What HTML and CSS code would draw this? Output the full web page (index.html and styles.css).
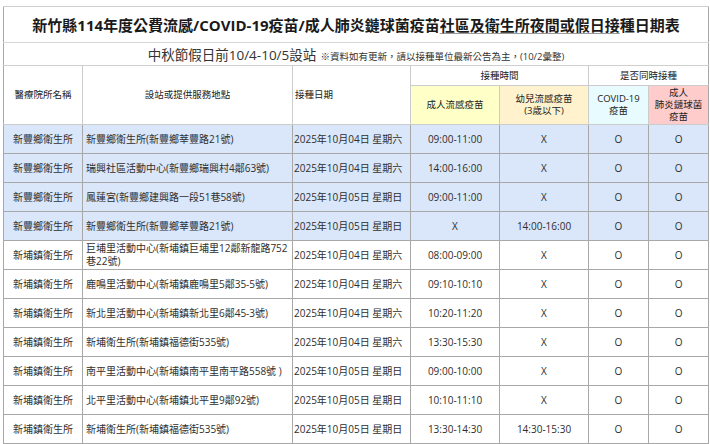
FILE: index.html
```html
<!DOCTYPE html>
<html lang="zh-Hant">
<head>
<meta charset="utf-8">
<title>接種日期表</title>
<link rel="stylesheet" href="styles.css">
</head>
<body>
<table class="sched">
  <colgroup>
    <col class="c-org"><col class="c-site"><col class="c-date"><col class="c-t1"><col class="c-t2"><col class="c-t3"><col class="c-t4">
  </colgroup>
  <thead>
    <tr class="r-title"><th colspan="7">新竹縣114年度公費流感/COVID-19疫苗/成人肺炎鏈球菌疫苗<span class="ul">社區及衛生所夜間或假日接</span>種日期表</th></tr>
    <tr class="r-sub"><th colspan="7"><span class="big">中秋節假日前10/4-10/5設站</span> <span class="note">※資料如有更新，請以接種單位最新公告為主，(10/2彙整)</span></th></tr>
    <tr class="r-h1">
      <th rowspan="2" class="h">醫療院所名稱</th>
      <th rowspan="2" class="h">設站或提供服務地點</th>
      <th rowspan="2" class="h left">接種日期</th>
      <th colspan="2" class="h">接種時間</th>
      <th colspan="2" class="h">是否同時接種</th>
    </tr>
    <tr class="r-h2">
      <th class="h y1">成人流感疫苗</th>
      <th class="h y2">幼兒流感疫苗<br>(3歲以下)</th>
      <th class="h cy">COVID-19<br>疫苗</th>
      <th class="h pk">成人<br>肺炎鏈球菌<br>疫苗</th>
    </tr>
  </thead>
  <tbody>
    <tr class="blue"><td>新豐鄉衛生所</td><td class="site">新豐鄉衛生所(新豐鄉莘豐路21號)</td><td class="date">2025年10月04日 星期六</td><td>09:00-11:00</td><td>X</td><td>O</td><td>O</td></tr>
    <tr class="blue"><td>新豐鄉衛生所</td><td class="site">瑞興社區活動中心(新豐鄉瑞興村4鄰63號)</td><td class="date">2025年10月04日 星期六</td><td>14:00-16:00</td><td>X</td><td>O</td><td>O</td></tr>
    <tr class="blue"><td>新豐鄉衛生所</td><td class="site">鳳蓮宮(新豐鄉建興路一段51巷58號)</td><td class="date">2025年10月05日 星期日</td><td>09:00-11:00</td><td>X</td><td>O</td><td>O</td></tr>
    <tr class="blue"><td>新豐鄉衛生所</td><td class="site">新豐鄉衛生所(新豐鄉莘豐路21號)</td><td class="date">2025年10月05日 星期日</td><td>X</td><td>14:00-16:00</td><td>O</td><td>O</td></tr>
    <tr><td>新埔鎮衛生所</td><td class="site">巨埔里活動中心(新埔鎮巨埔里12鄰新龍路752<br>巷22號)</td><td class="date">2025年10月04日 星期六</td><td>08:00-09:00</td><td>X</td><td>O</td><td>O</td></tr>
    <tr><td>新埔鎮衛生所</td><td class="site">鹿鳴里活動中心(新埔鎮鹿鳴里5鄰35-5號)</td><td class="date">2025年10月04日 星期六</td><td>09:10-10:10</td><td>X</td><td>O</td><td>O</td></tr>
    <tr><td>新埔鎮衛生所</td><td class="site">新北里活動中心(新埔鎮新北里6鄰45-3號)</td><td class="date">2025年10月04日 星期六</td><td>10:20-11:20</td><td>X</td><td>O</td><td>O</td></tr>
    <tr><td>新埔鎮衛生所</td><td class="site">新埔衛生所(新埔鎮福德街535號)</td><td class="date">2025年10月04日 星期六</td><td>13:30-15:30</td><td>X</td><td>O</td><td>O</td></tr>
    <tr><td>新埔鎮衛生所</td><td class="site">南平里活動中心(新埔鎮南平里南平路558號 )</td><td class="date">2025年10月05日 星期日</td><td>09:00-10:00</td><td>X</td><td>O</td><td>O</td></tr>
    <tr><td>新埔鎮衛生所</td><td class="site">北平里活動中心(新埔鎮北平里9鄰92號)</td><td class="date">2025年10月05日 星期日</td><td>10:10-11:10</td><td>X</td><td>O</td><td>O</td></tr>
    <tr><td>新埔鎮衛生所</td><td class="site">新埔衛生所(新埔鎮福德街535號)</td><td class="date">2025年10月05日 星期日</td><td>13:30-14:30</td><td>14:30-15:30</td><td>O</td><td>O</td></tr>
  </tbody>
</table>
</body>
</html>
```

FILE: styles.css
```css
html, body {
  margin: 0;
  padding: 0;
  background: #ffffff;
}
body {
  padding: 6px 2px 0 3px;
  font-family: "Open Sans", "Noto Sans CJK TC", sans-serif;
  color: #333333;
}
.sched {
  border-collapse: collapse;
  table-layout: fixed;
  width: 705px;
  border-left: 1px solid #a8a8a8;
  border-right: 1px solid #a8a8a8;
}
.c-org { width: 79px; }
.c-site { width: 210px; }
.c-date { width: 118px; }
.c-t1 { width: 89px; }
.c-t2 { width: 89px; }
.c-t3 { width: 60px; }
.c-t4 { width: 60px; }

.sched th, .sched td {
  padding: 0;
  font-weight: normal;
  text-align: center;
  vertical-align: middle;
  overflow: hidden;
  white-space: nowrap;
}

.r-title th {
  height: 35px;
  border-top: 1px solid #cfcfcf;
  border-bottom: 1px solid #d8d8d8;
  font-size: 15px;
  font-weight: 700;
  color: #1a1a1a;
}
.ul {
  text-decoration: underline;
  text-decoration-color: #9a9a9a;
  text-decoration-thickness: 1px;
  text-underline-offset: 2px;
}
.r-sub th {
  height: 20px;
  border-bottom: 1px solid #cfcfcf;
  color: #333333;
}
.r-sub .big {
  font-size: 13.5px;
}
.r-sub .note {
  font-size: 9.5px;
}
.r-h1 th {
  height: 19px;
}
.r-h2 th {
  height: 38px;
}
.sched .h {
  font-size: 9.5px;
  line-height: 12px;
  color: #222222;
  border: 1px solid #cccccc;
}
.sched .left {
  text-align: left;
  padding-left: 2px;
}
.r-h1 th:first-child { border-left: none; }
.r-h1 th:last-child, .r-h2 th:last-child { border-right: none; }
.y1 { background: #ffffc8; }
.y2 { background: #fff2cc; }
.cy { background: #e8fcff; }
.pk { background: #ffcccc; }

.sched td {
  height: 28px;
  font-size: 10px;
  line-height: 13px;
  color: #2e2e2e;
  border: 1px solid #a8a8a8;
}
.sched tbody tr td:first-child { border-left: none; }
.sched tbody tr td:last-child { border-right: none; }
.sched td.site {
  text-align: left;
  padding-left: 3px;
  white-space: normal;
}
.sched td.date {
  text-align: left;
  padding-left: 1px;
  font-size: 10px;
}
.blue td {
  background: #dae6f9;
}
```
